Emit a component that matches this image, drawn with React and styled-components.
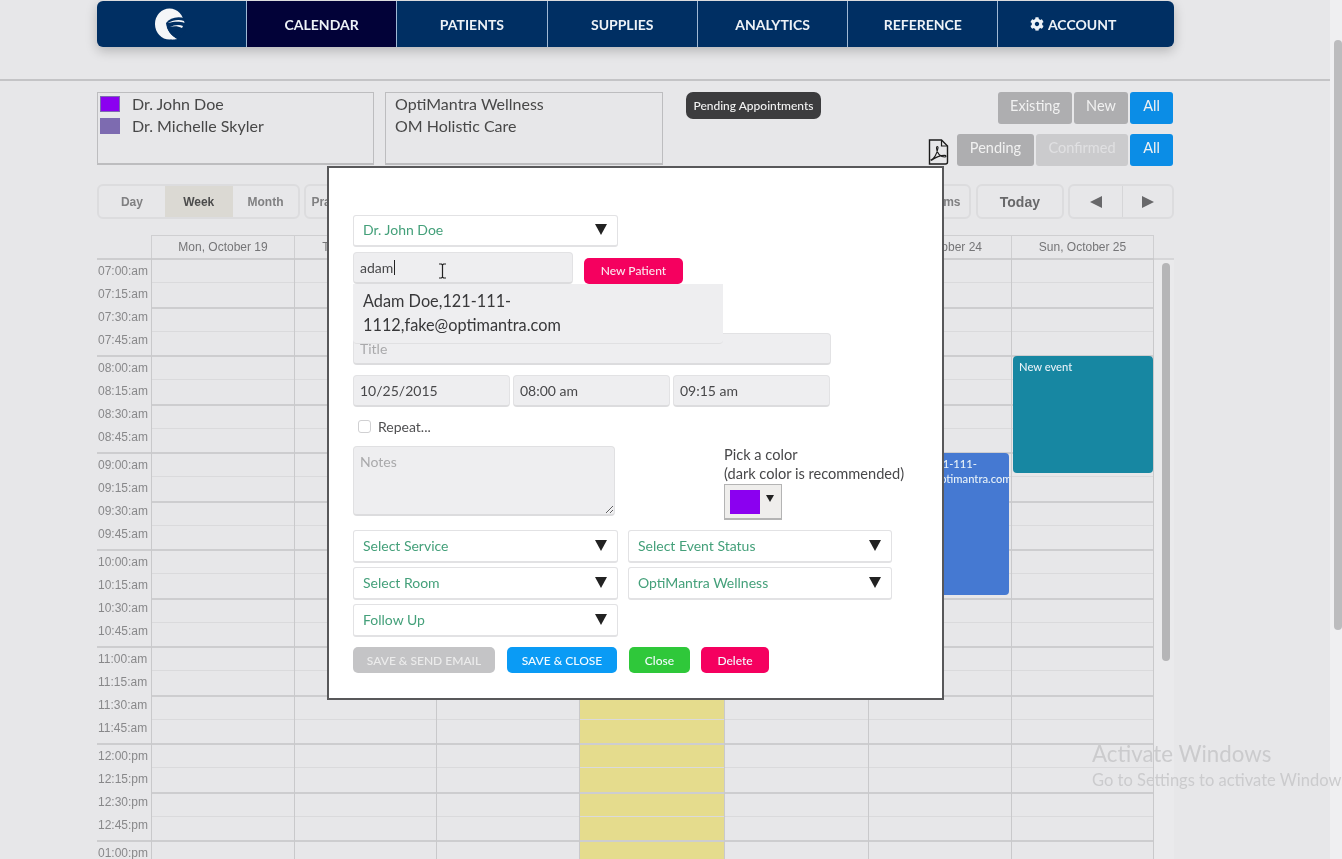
import React from 'react';
import styled, { createGlobalStyle } from 'styled-components';
import { FaCog } from 'react-icons/fa';

const GlobalStyle = createGlobalStyle`
  html, body {
    margin: 0;
    padding: 0;
    background: #e7e7e9;
    font-family: Lato, "Open Sans", sans-serif;
    overflow: hidden;
  }
  * { box-sizing: border-box; }
`;

const Page = styled.div`
  position: relative;
  width: 1342px;
  height: 859px;
  overflow: hidden;
  display: flex;
  background: #e7e7e9;
  filter: blur(0.35px);
`;

const Main = styled.div`
  width: 1330px;
  display: flex;
  flex-direction: column;
  & > * { flex-shrink: 0; }
`;

const PageScroll = styled.div`
  flex: 1;
  padding: 40px 0 0 4px;
  background: #efeff1;
`;

const PageThumb = styled.div`
  height: 590px;
  background: #bcbcbe;
  border-radius: 4px;
`;

const Nav = styled.nav`
  margin: 1px 0 0 97px;
  width: 1077px;
  height: 46px;
  display: flex;
  background: #002f63;
  border-radius: 6px;
  box-shadow: 0 4px 12px rgba(0, 0, 0, 0.22);
  overflow: hidden;
`;

const NavItem = styled.div`
  flex: ${({ $logo }) => ($logo ? '0 0 149px' : '0 0 150.3px')};
  display: flex;
  align-items: center;
  justify-content: center;
  gap: 4px;
  color: #edf2f7;
  font-size: 14px;
  font-weight: 700;
  background: ${({ $active }) => ($active ? '#020238' : 'transparent')};
  border-left: ${({ $logo }) => ($logo ? 'none' : '1px solid #9fb8d4')};
`;

const LogoMark = styled.svg`
  width: 32px;
  height: 32px;
  margin-right: 4px;
`;

const Divider = styled.div`
  margin-top: 32px;
  height: 2px;
  background: #c4c4c6;
`;

const Content = styled.div`
  margin-left: 97px;
  width: 1077px;
`;

const FilterBar = styled.div`
  height: 103px;
  padding-top: 11px;
  display: flex;
  align-items: flex-start;
`;

const FilterBox = styled.div`
  width: ${({ $w }) => $w}px;
  height: 73px;
  margin-right: 11px;
  padding: 0 3px 0 ${({ $pad }) => $pad}px;
  border: 1px solid #bdbdbf;
  border-bottom-width: 2px;
  font-size: 16px;
  line-height: 22px;
  color: #484848;
`;

const DoctorRow = styled.div`
  display: flex;
  align-items: center;
  gap: 12px;
`;

const Swatch = styled.span`
  width: 20px;
  height: 16px;
  background: ${({ $color }) => $color};
  border: 1px solid #7d6bb0;
`;

const PendingButton = styled.div`
  width: 135px;
  height: 27px;
  margin-left: 12px;
  background: #3c3c3e;
  color: #f2f2f2;
  border-radius: 7px;
  font-size: 12px;
  font-weight: 500;
  display: flex;
  align-items: center;
  justify-content: center;
`;

const FilterRight = styled.div`
  flex: 1;
  display: flex;
  flex-direction: column;
  align-items: flex-end;
  gap: 10px;
  padding-right: 1px;
`;

const ToggleRow = styled.div`
  display: flex;
  align-items: center;
  gap: 2px;
`;

const Toggle = styled.div`
  width: ${({ $w }) => $w}px;
  height: 32px;
  display: flex;
  align-items: center;
  justify-content: center;
  padding-bottom: 5px;
  font-size: 14.5px;
  color: ${({ $tone }) => ($tone === 'faint' ? '#e0e0e2' : '#f1f1f1')};
  background: ${({ $tone }) =>
    $tone === 'all' ? '#0b8de6' : $tone === 'faint' ? '#cbcbcd' : '#aeaeb0'};
  border-radius: 3px;
`;

const PdfIcon = styled.svg`
  width: 23px;
  height: 26px;
  margin: 3px 5px 0 0;
`;

const ViewBar = styled.div`
  height: 51px;
  display: flex;
  align-items: flex-start;
`;

const ViewGroup = styled.div`
  display: flex;
  height: 35px;
  margin-left: ${({ $ml }) => $ml || 0}px;
  border: 2px solid #dcdcde;
  border-radius: 6px;
  overflow: hidden;
`;

const ViewButton = styled.div`
  width: ${({ $w }) => $w}px;
  padding: ${({ $justify }) => ($justify ? '0 8px 0 5px' : '0')};
  display: flex;
  align-items: center;
  justify-content: ${({ $justify }) => $justify || 'center'};
  font-family: "Liberation Sans", Arial, sans-serif;
  font-size: 12px;
  font-weight: 700;
  color: ${({ $active }) => ($active ? '#4c4c4c' : '#808082')};
  background: ${({ $active }) => ($active ? '#dbd9d3' : 'transparent')};
  border-left: ${({ $split }) => ($split ? '1px solid #d6d6d8' : 'none')};
`;

const TodayButton = styled(ViewButton)`
  font-size: 14px;
  color: #68686a;
`;

const Arrow = styled.span`
  width: 0;
  height: 0;
  border-top: 6px solid transparent;
  border-bottom: 6px solid transparent;
  border-${({ $dir }) => ($dir === 'left' ? 'right' : 'left')}: 12px solid #68686a;
`;

const Calendar = styled.div`
  display: flex;
`;

const CalendarMain = styled.div`
  width: 1057px;
`;

const GridHead = styled.div`
  height: 23px;
  display: grid;
  grid-template-columns: 54px 144px 142px 143px 145px 144px 143px 142px;
`;

const HeadCell = styled.div`
  font-family: "Liberation Sans", Arial, sans-serif;
  font-size: 12px;
  line-height: 23px;
  text-align: center;
  color: #757577;
  border-top: 1px solid #cfcfd1;
  border-right: 1px solid #cfcfd1;
  border-left: ${({ $first }) => ($first ? '1px solid #cfcfd1' : 'none')};
`;

const GridBody = styled.div`
  display: grid;
  grid-template-columns: 54px 144px 142px 143px 145px 144px 143px 142px;
`;

const TimeHour = styled.div`
  height: 97px;
  border-top: 2px solid #cdcdcf;
`;

const TimeLabel = styled.div`
  font-family: "Liberation Sans", Arial, sans-serif;
  font-size: 12px;
  line-height: 23px;
  color: #88888a;
  padding-left: 1px;
`;

const DayColumn = styled.div`
  position: relative;
  background: ${({ $today }) => ($today ? '#e5dc8d' : 'transparent')};
  border-right: 1px solid #c9c9cb;
  border-left: ${({ $first }) => ($first ? '1px solid #c9c9cb' : 'none')};
`;

const Slot = styled.div`
  height: 24.25px;
  border-top: ${({ $strong }) => ($strong ? '2px solid #cdcdcf' : '1px solid #dadadc')};
`;

const EventCard = styled.div`
  position: absolute;
  left: ${({ $left }) => $left}px;
  right: ${({ $right }) => $right}px;
  top: ${({ $top }) => $top}px;
  height: ${({ $h }) => $h}px;
  padding: ${({ $pad }) => $pad};
  background: ${({ $color }) => $color};
  border-radius: 4px;
  color: #e8f2f8;
  font-size: 11.2px;
  line-height: 15px;
  font-weight: 500;
  overflow: hidden;
  white-space: nowrap;
`;

const InnerScroll = styled.div`
  flex: 1;
  margin-top: 23px;
  padding: 3px 4px 0 8px;
  border-top: 2px solid #d6d6d8;
  background: #eaeaec;
`;

const InnerThumb = styled.div`
  height: 398px;
  background: #b5b5b7;
  border-radius: 4px;
`;

const Modal = styled.div`
  position: absolute;
  left: 327px;
  top: 166px;
  width: 617px;
  height: 534px;
  padding: 47px 0 0 24px;
  background: #fff;
  border: 2px solid #58585a;
  display: flex;
  flex-direction: column;
`;

const FormRow = styled.div`
  position: relative;
  display: flex;
  align-items: ${({ $align }) => $align || 'flex-start'};
  gap: ${({ $gap }) => $gap || 0}px;
  margin-top: ${({ $mt }) => $mt || 0}px;
`;

const SelectBox = styled.div`
  width: ${({ $w }) => $w || 265}px;
  height: ${({ $h }) => $h || 33}px;
  padding: 0 9px 2px;
  display: flex;
  align-items: center;
  justify-content: space-between;
  border: 1px solid #e2e2e4;
  border-bottom-width: 2px;
  border-radius: 3px;
  font-size: 14px;
  color: #44a07a;
  background: #fff;
`;

const Caret = styled.span`
  width: 0;
  height: 0;
  margin-right: ${({ $mr }) => ($mr === undefined ? 1 : $mr)}px;
  border-left: ${({ $s }) => $s || 6}px solid transparent;
  border-right: ${({ $s }) => $s || 6}px solid transparent;
  border-top: ${({ $s }) => ($s ? $s * 1.9 : 11)}px solid #222;
`;

const Field = styled.div`
  width: ${({ $w }) => $w}px;
  height: ${({ $h }) => $h || 32}px;
  padding: 0 6px;
  display: flex;
  align-items: center;
  background: #eeeef0;
  border: 1px solid #e2e2e4;
  border-bottom: 2px solid #dcdcde;
  border-radius: 4px;
  font-size: 14px;
  color: ${({ $muted }) => ($muted ? '#a9a9ab' : '#48484a')};
`;

const TypingCaret = styled.span`
  width: 1px;
  height: 15px;
  margin-left: 1px;
  background: #222;
`;

const IBeam = styled.svg`
  position: absolute;
  left: 85px;
  top: 11px;
`;

const NewPatient = styled.div`
  width: 99px;
  height: 26px;
  padding-bottom: 1px;
  background: #f5005f;
  color: #fbe6ee;
  font-size: 12px;
  font-weight: 500;
  border-radius: 5px;
  display: flex;
  align-items: center;
  justify-content: center;
`;

const Suggestions = styled.div`
  position: absolute;
  left: 0;
  top: 32px;
  width: 370px;
  height: 60px;
  padding: 5px 10px;
  background: #eeeef0;
  border-bottom: 1px solid #e0e0e2;
  border-radius: 0 0 4px 4px;
  font-size: 16.3px;
  line-height: 24px;
  color: #38383a;
  z-index: 2;
`;

const RepeatLabel = styled.label`
  display: flex;
  align-items: center;
  gap: 7px;
  margin-left: 5px;
  font-size: 14px;
  color: #505052;
`;

const CheckBox = styled.span`
  width: 13px;
  height: 13px;
  background: #fff;
  border: 1px solid #d0d0d2;
  border-radius: 3px;
`;

const Notes = styled.textarea`
  display: block;
  width: 262px;
  height: 70px;
  padding: 6px;
  background: #eeeef0;
  border: 1px solid #e0e0e2;
  border-bottom: 2px solid #dcdcde;
  border-radius: 4px;
  font-family: inherit;
  font-size: 14px;
  outline: none;
  &::placeholder { color: #a9a9ab; }
`;

const ColorPicker = styled.div`
  margin: -1px 0 0 109px;
  font-size: 14.6px;
  line-height: 19px;
  color: #48484a;
`;

const ColorButton = styled.div`
  width: 58px;
  height: 36px;
  margin-top: 1px;
  padding: 5px 0 0 5px;
  display: flex;
  align-items: flex-start;
  gap: 6px;
  background: #efeeec;
  border: 1px solid #b4b4b4;
  border-bottom-width: 2px;
`;

const ColorChip = styled.span`
  width: 30px;
  height: 24px;
  background: #8b00f0;
`;

const ChipCaret = styled(Caret)`
  margin-top: 5px;
`;

const ActionButton = styled.div`
  width: ${({ $w }) => $w}px;
  height: 26px;
  padding-top: 1px;
  margin-right: ${({ $mr }) => $mr || 0}px;
  background: ${({ $color }) => $color};
  color: ${({ $dim }) => ($dim ? '#ececec' : '#f4fbff')};
  font-size: 12px;
  font-weight: 500;
  border-radius: 5px;
  display: flex;
  align-items: center;
  justify-content: center;
`;

const Watermark = styled.div`
  position: absolute;
  left: 1092px;
  top: 741px;
  width: 250px;
  overflow: hidden;
  white-space: nowrap;
  color: #cbcbcd;
`;

const WatermarkTitle = styled.div`
  font-size: 22.3px;
  line-height: 26px;
`;

const WatermarkHint = styled.div`
  font-size: 16.5px;
  line-height: 26px;
`;

const days = ['Mon, October 19', 'Tue, October 20', 'Wed, October 21', 'Thu, October 22', 'Fri, October 23', 'Sat, October 24', 'Sun, October 25'];
const hours = [
  ['07', 'am'], ['08', 'am'], ['09', 'am'], ['10', 'am'], ['11', 'am'], ['12', 'pm'], ['01', 'pm'],
];
const quarters = ['00', '15', '30', '45'];
const slots = Array.from({ length: 28 }, (_, i) => i);

const Logo = () => (
  <LogoMark viewBox="0 0 32 32">
    <ellipse cx="15.5" cy="16" rx="14.5" ry="15.5" fill="#f5f6f8" />
    <path d="M12 15c4-5 10-7 19-5l1 12-9 9c-6-3-11-9-11-16z" fill="#002f63" />
    <path d="M14 15c5-3 11-4 16-2l.5 2c-6-2-11-1-16 0zM16 19c4-2 9-3 13-1l-1 2c-4-2-8-2-12-1z" fill="#f5f6f8" />
    <path d="M12 15c0 7 5 13 11 16-1 .3-3 .6-5 .4C13 29 11 22 12 15z" fill="#f5f6f8" />
  </LogoMark>
);

const Select = ({ children, w, h }) => (
  <SelectBox $w={w} $h={h}>
    {children}
    <Caret />
  </SelectBox>
);

export default function App() {
  return (
    <Page>
      <GlobalStyle />
      <Main>
        <Nav>
          <NavItem $logo><Logo /></NavItem>
          <NavItem $active>CALENDAR</NavItem>
          <NavItem>PATIENTS</NavItem>
          <NavItem>SUPPLIES</NavItem>
          <NavItem>ANALYTICS</NavItem>
          <NavItem>REFERENCE</NavItem>
          <NavItem><FaCog size={14} />ACCOUNT</NavItem>
        </Nav>
        <Divider />
        <Content>
          <FilterBar>
            <FilterBox $w={277} $pad={2}>
              <DoctorRow><Swatch $color="#8b00f0" />Dr. John Doe</DoctorRow>
              <DoctorRow><Swatch $color="#7d6bb0" />Dr. Michelle Skyler</DoctorRow>
            </FilterBox>
            <FilterBox $w={278} $pad={9}>
              <div>OptiMantra Wellness</div>
              <div>OM Holistic Care</div>
            </FilterBox>
            <PendingButton>Pending Appointments</PendingButton>
            <FilterRight>
              <ToggleRow>
                <Toggle $w={74}>Existing</Toggle>
                <Toggle $w={54}>New</Toggle>
                <Toggle $w={43} $tone="all">All</Toggle>
              </ToggleRow>
              <ToggleRow>
                <PdfIcon viewBox="0 0 23 26" fill="none" stroke="#1c1c1c">
                  <path d="M2.5 1h12l6 6v16a2 2 0 0 1-2 2h-16z" strokeWidth="1.4" />
                  <path d="M14.5 1v6h6" strokeWidth="1.2" />
                  <path d="M4 21c3-1 6-6 7-12 .3-2-1.5-2-1.5 0 0 5 4 9 8 9 2 0 2-1.6 0-1.6-4 0-9 2-13 5z" strokeWidth="1.1" />
                </PdfIcon>
                <Toggle $w={77}>Pending</Toggle>
                <Toggle $w={92} $tone="faint">Confirmed</Toggle>
                <Toggle $w={43} $tone="all">All</Toggle>
              </ToggleRow>
            </FilterRight>
          </FilterBar>
          <ViewBar>
            <ViewGroup>
              <ViewButton $w={66}>Day</ViewButton>
              <ViewButton $w={68} $active>Week</ViewButton>
              <ViewButton $w={66}>Month</ViewButton>
            </ViewGroup>
            <ViewGroup $ml={4}>
              <ViewButton $w={333} $justify="flex-start">Practitioners</ViewButton>
              <ViewButton $w={331} $justify="flex-end" $split>Rooms</ViewButton>
            </ViewGroup>
            <ViewGroup $ml={5}>
              <TodayButton $w={85}>Today</TodayButton>
            </ViewGroup>
            <ViewGroup $ml={4}>
              <ViewButton $w={52}><Arrow $dir="left" /></ViewButton>
              <ViewButton $w={50} $split><Arrow $dir="right" /></ViewButton>
            </ViewGroup>
          </ViewBar>
          <Calendar>
            <CalendarMain>
              <GridHead>
                <div />
                {days.map((day, i) => (
                  <HeadCell key={day} $first={i === 0}>{day}</HeadCell>
                ))}
              </GridHead>
              <GridBody>
                <div>
                  {hours.map(([h, suffix]) => (
                    <TimeHour key={h}>
                      {quarters.map((q) => (
                        <TimeLabel key={q}>{`${h}:${q}:${suffix}`}</TimeLabel>
                      ))}
                    </TimeHour>
                  ))}
                </div>
                {days.map((day, i) => (
                  <DayColumn key={day} $first={i === 0} $today={i === 3}>
                    {slots.map((s) => (
                      <Slot key={s} $strong={s % 2 === 0} />
                    ))}
                    {i === 5 && (
                      <EventCard $left={0} $right={2} $top={195} $h={142} $pad="3px 2px 0 6px" $color="#4579d2">
                        <div>Adam Doe,121-111-</div>
                        <div>1112,fake@optimantra.com</div>
                      </EventCard>
                    )}
                    {i === 6 && (
                      <EventCard $left={1} $right={0} $top={98} $h={117} $pad="3px 6px 0 6px" $color="#1787a2">
                        New event
                      </EventCard>
                    )}
                  </DayColumn>
                ))}
              </GridBody>
            </CalendarMain>
            <InnerScroll><InnerThumb /></InnerScroll>
          </Calendar>
        </Content>
      </Main>
      <PageScroll><PageThumb /></PageScroll>

      <Modal>
        <Select h={32}>Dr. John Doe</Select>
        <FormRow $mt={5} $gap={11} $align="flex-end">
          <Field $w={220}>adam<TypingCaret /></Field>
          <IBeam width="9" height="16" viewBox="0 0 9 16">
            <path d="M1 1h2.5l1 1 1-1H8M4.5 2v12M1 15h2.5l1-1 1 1H8" fill="none" stroke="#222" strokeWidth="1.2" />
          </IBeam>
          <NewPatient>New Patient</NewPatient>
          <Suggestions>Adam Doe,121-111-<br />1112,fake@optimantra.com</Suggestions>
        </FormRow>
        <FormRow $mt={49}>
          <Field $w={478} $muted>Title</Field>
        </FormRow>
        <FormRow $mt={10} $gap={3}>
          <Field $w={157}>10/25/2015</Field>
          <Field $w={157}>08:00 am</Field>
          <Field $w={157}>09:15 am</Field>
        </FormRow>
        <FormRow $mt={11}>
          <RepeatLabel><CheckBox />Repeat...</RepeatLabel>
        </FormRow>
        <FormRow $mt={11}>
          <Notes placeholder="Notes" />
          <ColorPicker>
            Pick a color
            <br />
            (dark color is recommended)
            <ColorButton>
              <ColorChip />
              <ChipCaret $s={4} $mr={0} />
            </ColorButton>
          </ColorPicker>
        </FormRow>
        <FormRow $mt={10} $gap={10}>
          <Select>Select Service</Select>
          <Select w={264}>Select Event Status</Select>
        </FormRow>
        <FormRow $mt={4} $gap={10}>
          <Select>Select Room</Select>
          <Select w={264}>OptiMantra Wellness</Select>
        </FormRow>
        <FormRow $mt={4}>
          <Select>Follow Up</Select>
        </FormRow>
        <FormRow $mt={10}>
          <ActionButton $w={142} $mr={12} $color="#c4c4c6" $dim>SAVE &amp; SEND EMAIL</ActionButton>
          <ActionButton $w={110} $mr={12} $color="#0a9bf5">SAVE &amp; CLOSE</ActionButton>
          <ActionButton $w={61} $mr={11} $color="#2fc83a">Close</ActionButton>
          <ActionButton $w={68} $color="#f5005f">Delete</ActionButton>
        </FormRow>
      </Modal>

      <Watermark>
        <WatermarkTitle>Activate Windows</WatermarkTitle>
        <WatermarkHint>Go to Settings to activate Windows.</WatermarkHint>
      </Watermark>
    </Page>
  );
}
